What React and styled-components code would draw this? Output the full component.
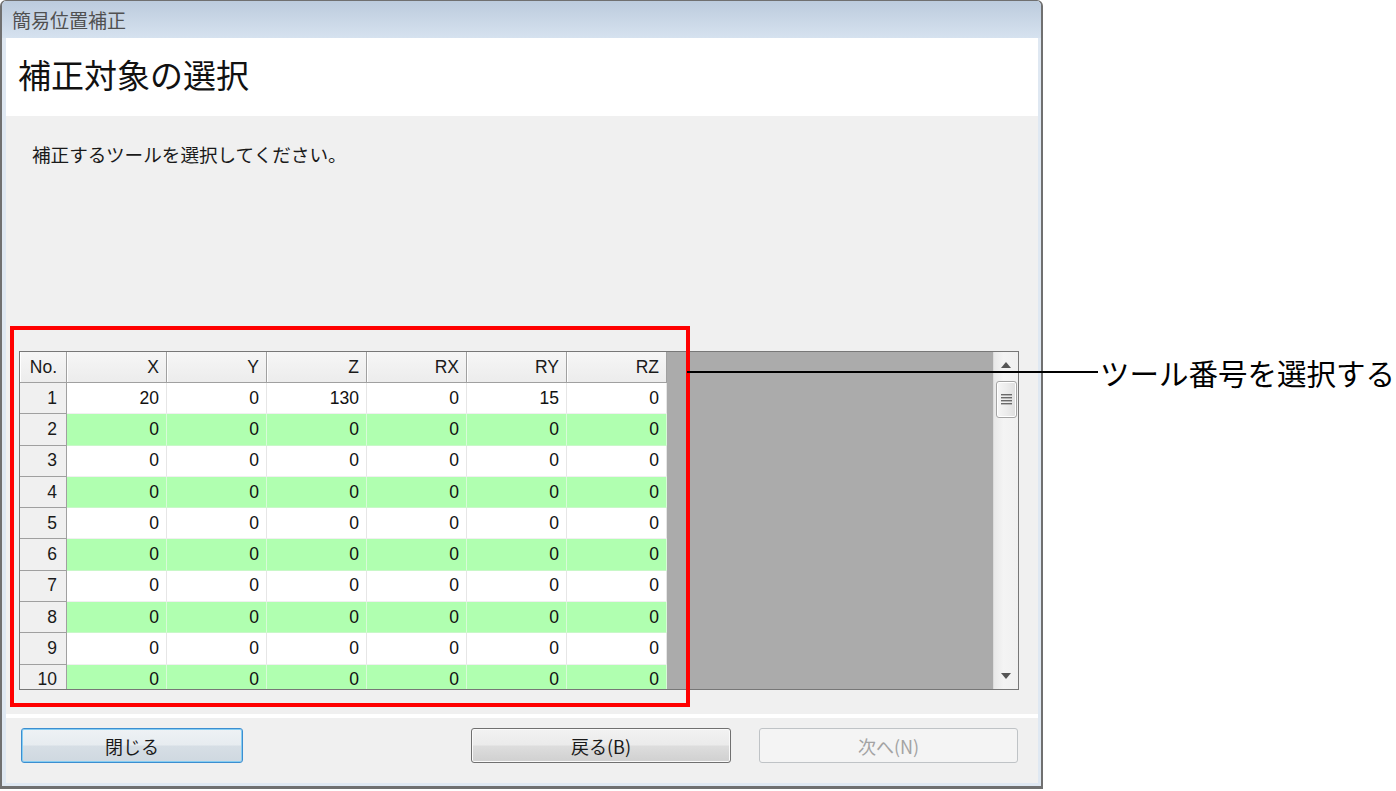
import React from 'react';
import styled, { createGlobalStyle } from 'styled-components';

const JP = `"Noto Sans CJK JP", "Noto Sans", sans-serif`;
const NUM = `"Liberation Sans", "Noto Sans CJK JP", sans-serif`;

const GlobalStyle = createGlobalStyle`
  html, body { margin: 0; padding: 0; background: #ffffff; }
  body { font-family: ${JP}; }
  * { box-sizing: border-box; }
`;

const Page = styled.div`
  position: relative;
  width: 1396px;
  height: 791px;
  overflow: hidden;
  background: #ffffff;
`;

const Window = styled.div`
  width: 1043px;
  height: 789px;
  border: 2px solid #707070;
  border-top-width: 1px;
  border-bottom-width: 3px;
  border-radius: 6px 6px 0 0;
  background: #dfe8f2;
  display: flex;
  flex-direction: column;
  overflow: hidden;
`;

const TitleBar = styled.div`
  height: 37px;
  flex: none;
  padding-left: 10px;
  display: flex;
  align-items: center;
  background: linear-gradient(#bccbdd, #d6e2ef);
  color: #505050;
  font-family: ${JP};
  font-size: 19px;
`;

const Client = styled.div`
  flex: 1;
  margin: 0 3px 3px 4px;
  display: flex;
  flex-direction: column;
  background: #f0f0f0;
`;

const Header = styled.div`
  height: 78px;
  flex: none;
  background: #ffffff;
  padding: 0 0 6px 12px;
  display: flex;
  align-items: center;
`;

const Heading = styled.h1`
  margin: 0;
  font-family: ${JP};
  font-weight: 400;
  font-size: 33px;
  color: #111;
`;

const Body = styled.div`
  height: 598px;
  flex: none;
  display: flex;
  flex-direction: column;
  padding: 24px 19px 24px 13px;
`;

const Instruction = styled.p`
  margin: 0 0 0 13px;
  font-family: ${JP};
  font-size: 18.6px;
  line-height: 27px;
  color: #1a1a1a;
`;

const Grid = styled.div`
  margin-top: auto;
  height: 339px;
  border: 1px solid #777777;
  display: flex;
  background: #ababab;
`;

const Table = styled.div`
  width: 647px;
  flex: none;
  display: flex;
  flex-direction: column;
  overflow: hidden;
`;

const Row = styled.div`
  display: flex;
  flex: none;
  height: ${(p) => (p.$head ? '31px' : '31.3px')};
`;

const HeadCell = styled.div`
  width: ${(p) => (p.$first ? '47px' : '100px')};
  flex: none;
  display: flex;
  align-items: center;
  justify-content: flex-end;
  padding-right: ${(p) => (p.$first ? '9px' : '7px')};
  background: linear-gradient(#f6f6f6, #ececec);
  border-right: 1px solid #a0a0a0;
  border-bottom: 1px solid #a0a0a0;
  box-shadow: inset 1px 0 0 #ffffff;
  font-family: ${NUM};
  font-size: 17.5px;
  color: #1a1a1a;
`;

const RowHead = styled.div`
  width: 47px;
  flex: none;
  display: flex;
  align-items: center;
  justify-content: flex-end;
  padding-right: 9px;
  background: #f0f0f0;
  border-right: 1px solid #a0a0a0;
  border-bottom: 1px solid #a0a0a0;
  font-family: ${NUM};
  font-size: 17.5px;
  color: #1a1a1a;
`;

const Cell = styled.div`
  width: 100px;
  flex: none;
  display: flex;
  align-items: center;
  justify-content: flex-end;
  padding-right: 7px;
  background: ${(p) => (p.$alt ? '#b0ffb0' : '#ffffff')};
  border-right: 1px solid ${(p) => (p.$alt ? '#d8fbd8' : '#e6e6e6')};
  border-bottom: 1px solid ${(p) => (p.$alt ? '#c8f8c8' : '#f0f0f0')};
  font-family: ${NUM};
  font-size: 17.5px;
  color: #111;
`;

const Filler = styled.div`
  flex: 1;
  background: #ababab;
`;

const Scrollbar = styled.div`
  width: 25px;
  flex: none;
  display: flex;
  flex-direction: column;
  align-items: center;
  background: linear-gradient(to right, #e8e8e8, #f4f4f4 40%, #f0f0f0);
  border-left: 1px solid #dcdcdc;
`;

const ArrowBtn = styled.div`
  height: 26px;
  width: 100%;
  flex: none;
  display: flex;
  align-items: center;
  justify-content: center;
`;

const Thumb = styled.div`
  width: 21px;
  height: 37px;
  margin-top: 3px;
  border: 1px solid #a4a4a4;
  border-radius: 3px;
  background: linear-gradient(to right, #f6f6f6, #ececec 50%, #dedede);
  box-shadow: inset 0 0 0 1px #ffffff;
  display: flex;
  align-items: center;
  justify-content: center;
`;

const Track = styled.div`
  flex: 1;
`;

const Separator = styled.div`
  height: 4px;
  flex: none;
  background: #ffffff;
`;

const Footer = styled.div`
  flex: 1;
  display: flex;
  align-items: flex-start;
  padding: 10px 20px 0 15px;
`;

const Button = styled.button`
  height: 35px;
  width: ${(p) => p.$w}px;
  margin-left: ${(p) => p.$ml || 0}px;
  border-radius: 3px;
  font-family: ${JP};
  font-size: 18px;
  padding: 0;
  cursor: default;
  color: ${(p) => (p.$disabled ? '#a3a3a3' : '#1a1a1a')};
  border: 1px solid ${(p) => (p.$default ? '#3c8ed0' : p.$disabled ? '#bfc3c6' : '#707070')};
  background: ${(p) =>
    p.$disabled
      ? '#f4f4f4'
      : p.$default
      ? 'linear-gradient(#eef2f5 0%, #e7ecf0 48%, #d6dee5 52%, #cfd8e0 100%)'
      : 'linear-gradient(#f2f2f2 0%, #ebebeb 48%, #dddddd 52%, #d0d0d0 100%)'};
  box-shadow: ${(p) =>
    p.$default ? 'inset 0 0 0 1px #86cdf2' : p.$disabled ? 'none' : 'inset 0 0 0 1px #fafafa'};
`;

const RedBox = styled.div`
  position: absolute;
  left: 10px;
  top: 326px;
  width: 680px;
  height: 381px;
  border: 4px solid #ff0000;
  pointer-events: none;
`;

const Callout = styled.div`
  position: absolute;
  left: 687px;
  top: 352px;
  height: 40px;
  display: flex;
  align-items: center;
`;

const CalloutLine = styled.div`
  width: 411px;
  height: 2px;
  background: #000;
`;

const CalloutLabel = styled.span`
  margin-left: 2px;
  font-family: ${JP};
  font-size: 29.5px;
  color: #000;
  white-space: nowrap;
`;

const rows = [
  [20, 0, 130, 0, 15, 0],
  ...Array.from({ length: 9 }, () => [0, 0, 0, 0, 0, 0]),
];
const cols = ['X', 'Y', 'Z', 'RX', 'RY', 'RZ'];

const Grip = () => (
  <svg width="11" height="12" viewBox="0 0 11 12">
    {[1, 4, 7, 10].map((y) => (
      <rect key={y} x="0" y={y - 1} width="11" height="1.4" fill="#6a6a6a" />
    ))}
  </svg>
);

const Tri = ({ down }) => (
  <svg width="10" height="6" viewBox="0 0 10 6">
    <path d={down ? 'M0 0 L10 0 L5 6 Z' : 'M0 6 L10 6 L5 0 Z'} fill="#555" />
  </svg>
);

export default function App() {
  return (
    <Page>
      <GlobalStyle />
      <Window>
        <TitleBar>簡易位置補正</TitleBar>
        <Client>
          <Header>
            <Heading>補正対象の選択</Heading>
          </Header>
          <Body>
            <Instruction>補正するツールを選択してください。</Instruction>
            <Grid>
              <Table>
                <Row $head>
                  <HeadCell $first>No.</HeadCell>
                  {cols.map((c) => (
                    <HeadCell key={c}>{c}</HeadCell>
                  ))}
                </Row>
                {rows.map((r, i) => (
                  <Row key={i}>
                    <RowHead>{i + 1}</RowHead>
                    {r.map((v, j) => (
                      <Cell key={j} $alt={i % 2 === 1}>
                        {v}
                      </Cell>
                    ))}
                  </Row>
                ))}
              </Table>
              <Filler />
              <Scrollbar>
                <ArrowBtn>
                  <Tri />
                </ArrowBtn>
                <Thumb>
                  <Grip />
                </Thumb>
                <Track />
                <ArrowBtn>
                  <Tri down />
                </ArrowBtn>
              </Scrollbar>
            </Grid>
          </Body>
          <Separator />
          <Footer>
            <Button $w={222} $default>閉じる</Button>
            <Button $w={260} $ml={228}>戻る(B)</Button>
            <Button $w={259} $ml={28} $disabled>次へ(N)</Button>
          </Footer>
        </Client>
      </Window>
      <RedBox />
      <Callout>
        <CalloutLine />
        <CalloutLabel>ツール番号を選択する</CalloutLabel>
      </Callout>
    </Page>
  );
}
